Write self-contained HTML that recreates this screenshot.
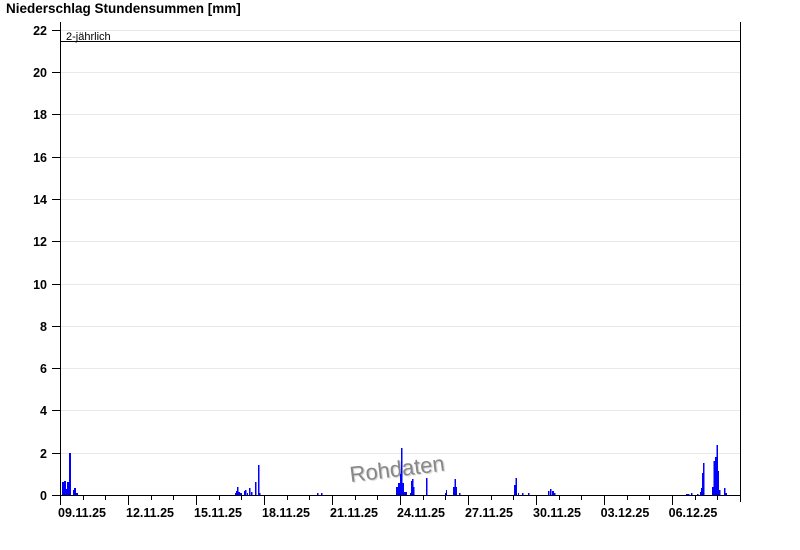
<!DOCTYPE html>
<html><head><meta charset="utf-8"><style>
html,body{margin:0;padding:0;background:#fff;width:800px;height:550px;overflow:hidden}
svg{display:block}
text{font-family:"Liberation Sans",Arial,sans-serif}
</style></head><body>
<svg width="800" height="550" xmlns="http://www.w3.org/2000/svg">
<text x="6" y="13" font-size="13.5" font-weight="bold">Niederschlag Stundensummen [mm]</text>
<g stroke="#e8e8e8" stroke-width="1">
<line x1="61" x2="740" y1="30.5" y2="30.5"/>
<line x1="61" x2="740" y1="72.5" y2="72.5"/>
<line x1="61" x2="740" y1="114.5" y2="114.5"/>
<line x1="61" x2="740" y1="157.5" y2="157.5"/>
<line x1="61" x2="740" y1="199.5" y2="199.5"/>
<line x1="61" x2="740" y1="241.5" y2="241.5"/>
<line x1="61" x2="740" y1="284.5" y2="284.5"/>
<line x1="61" x2="740" y1="326.5" y2="326.5"/>
<line x1="61" x2="740" y1="368.5" y2="368.5"/>
<line x1="61" x2="740" y1="410.5" y2="410.5"/>
<line x1="61" x2="740" y1="453.5" y2="453.5"/>
</g>
<g font-size="12.5" font-weight="bold" text-anchor="end">
<text x="47" y="35">22</text><text x="47" y="77">20</text><text x="47" y="119">18</text>
<text x="47" y="162">16</text><text x="47" y="204">14</text><text x="47" y="246">12</text>
<text x="47" y="289">10</text><text x="47" y="331">8</text><text x="47" y="373">6</text>
<text x="47" y="415">4</text><text x="47" y="458">2</text><text x="47" y="500">0</text>
</g>
<g stroke="#000" stroke-width="1">
<line x1="52" x2="61" y1="30.5" y2="30.5"/><line x1="52" x2="61" y1="72.5" y2="72.5"/>
<line x1="52" x2="61" y1="114.5" y2="114.5"/><line x1="52" x2="61" y1="157.5" y2="157.5"/>
<line x1="52" x2="61" y1="199.5" y2="199.5"/><line x1="52" x2="61" y1="241.5" y2="241.5"/>
<line x1="52" x2="61" y1="284.5" y2="284.5"/><line x1="52" x2="61" y1="326.5" y2="326.5"/>
<line x1="52" x2="61" y1="368.5" y2="368.5"/><line x1="52" x2="61" y1="410.5" y2="410.5"/>
<line x1="52" x2="61" y1="453.5" y2="453.5"/><line x1="52" x2="61" y1="495.5" y2="495.5"/>
</g>
<text x="349" y="476" font-size="22" fill="#888" transform="rotate(-7 400 466)" style="text-shadow:1px 1px 1px #ccc">Rohdaten</text>
<g fill="#0000ff">
<rect x="62" y="482" width="2" height="13"/><rect x="64" y="481" width="2" height="14"/><rect x="66" y="489" width="1" height="6"/>
<rect x="67" y="482" width="2" height="13"/><rect x="69" y="453" width="2" height="42"/><rect x="73" y="490" width="1" height="5"/>
<rect x="74" y="488" width="2" height="7"/><rect x="76" y="493" width="2" height="2"/>
<rect x="235" y="493" width="1" height="2"/><rect x="236" y="491" width="1" height="4"/><rect x="237" y="487" width="1.5" height="8"/>
<rect x="238.5" y="492" width="1.5" height="3"/><rect x="240" y="493" width="2" height="2"/><rect x="244" y="491" width="1" height="4"/>
<rect x="245" y="490" width="1.5" height="5"/><rect x="247" y="493" width="1" height="2"/><rect x="249" y="488" width="1.5" height="7"/>
<rect x="251" y="492" width="1.5" height="3"/><rect x="255" y="482" width="1.5" height="13"/><rect x="258" y="465" width="1.5" height="30"/>
<rect x="259.5" y="493" width="1" height="2"/>
<rect x="317" y="493" width="1.5" height="2"/><rect x="321" y="493" width="1.5" height="2"/>
<rect x="396" y="487" width="2" height="8"/><rect x="398" y="483" width="2" height="12"/><rect x="400" y="474" width="1" height="21"/>
<rect x="401" y="448" width="1.5" height="47"/><rect x="402.5" y="483" width="1.5" height="12"/><rect x="404" y="492" width="3" height="3"/>
<rect x="410" y="493" width="1" height="2"/><rect x="411" y="481" width="1" height="14"/><rect x="412" y="479" width="1.5" height="16"/>
<rect x="413.5" y="487" width="1" height="8"/><rect x="426" y="478" width="1.5" height="17"/>
<rect x="445" y="493" width="1" height="2"/><rect x="446" y="490" width="1" height="5"/><rect x="453" y="487" width="1.5" height="8"/>
<rect x="454.5" y="479" width="1.5" height="16"/><rect x="456" y="487" width="1" height="8"/><rect x="459" y="493" width="1.5" height="2"/>
<rect x="514" y="485" width="1.5" height="10"/><rect x="515.5" y="478" width="1.5" height="17"/><rect x="518" y="493" width="1" height="2"/>
<rect x="522" y="493" width="1.5" height="2"/><rect x="528" y="493" width="1.5" height="2"/>
<rect x="548" y="491" width="1.5" height="4"/><rect x="550" y="489" width="1.5" height="6"/><rect x="552" y="491" width="2" height="4"/>
<rect x="554" y="493" width="1.5" height="2"/>
<rect x="686" y="494" width="3.5" height="1"/><rect x="691" y="493" width="1.5" height="2"/><rect x="697" y="494" width="1.5" height="1"/>
<rect x="700" y="492" width="1" height="3"/><rect x="701" y="488" width="1" height="7"/><rect x="702" y="473" width="1" height="22"/>
<rect x="703" y="463" width="1.5" height="32"/>
<rect x="712" y="487" width="1.5" height="8"/><rect x="713.5" y="461" width="1.5" height="34"/><rect x="715" y="457" width="1.5" height="38"/>
<rect x="716.5" y="445" width="1.5" height="50"/><rect x="718" y="471" width="1" height="24"/><rect x="719" y="490" width="1.5" height="5"/>
<rect x="724" y="488" width="1.5" height="7"/><rect x="725.5" y="493" width="1.5" height="2"/>
</g>
<g stroke="#000" stroke-width="1">
<line x1="60.5" x2="60.5" y1="22" y2="496"/>
<line x1="740.5" x2="740.5" y1="22" y2="502"/>
<line x1="60" x2="741" y1="495.5" y2="495.5"/>
<line x1="61" x2="740" y1="41.5" y2="41.5"/>
</g>
<g stroke="#000" stroke-width="1">
<line x1="60.5" x2="60.5" y1="495" y2="505"/><line x1="128.5" x2="128.5" y1="495" y2="505"/>
<line x1="196.5" x2="196.5" y1="495" y2="505"/><line x1="264.5" x2="264.5" y1="495" y2="505"/>
<line x1="332.5" x2="332.5" y1="495" y2="505"/><line x1="400.5" x2="400.5" y1="495" y2="505"/>
<line x1="468.5" x2="468.5" y1="495" y2="505"/><line x1="536.5" x2="536.5" y1="495" y2="505"/>
<line x1="604.5" x2="604.5" y1="495" y2="505"/><line x1="672.5" x2="672.5" y1="495" y2="505"/>
<line x1="83.5" x2="83.5" y1="495" y2="500"/><line x1="105.5" x2="105.5" y1="495" y2="500"/>
<line x1="151.5" x2="151.5" y1="495" y2="500"/><line x1="173.5" x2="173.5" y1="495" y2="500"/>
<line x1="219.5" x2="219.5" y1="495" y2="500"/><line x1="241.5" x2="241.5" y1="495" y2="500"/>
<line x1="287.5" x2="287.5" y1="495" y2="500"/><line x1="309.5" x2="309.5" y1="495" y2="500"/>
<line x1="355.5" x2="355.5" y1="495" y2="500"/><line x1="377.5" x2="377.5" y1="495" y2="500"/>
<line x1="423.5" x2="423.5" y1="495" y2="500"/><line x1="445.5" x2="445.5" y1="495" y2="500"/>
<line x1="491.5" x2="491.5" y1="495" y2="500"/><line x1="513.5" x2="513.5" y1="495" y2="500"/>
<line x1="559.5" x2="559.5" y1="495" y2="500"/><line x1="581.5" x2="581.5" y1="495" y2="500"/>
<line x1="627.5" x2="627.5" y1="495" y2="500"/><line x1="649.5" x2="649.5" y1="495" y2="500"/>
<line x1="695.5" x2="695.5" y1="495" y2="500"/><line x1="717.5" x2="717.5" y1="495" y2="500"/>
</g>
<g font-size="12.5" font-weight="bold" text-anchor="middle">
<text x="82" y="517">09.11.25</text><text x="150" y="517">12.11.25</text><text x="218" y="517">15.11.25</text>
<text x="286" y="517">18.11.25</text><text x="354" y="517">21.11.25</text><text x="421" y="517">24.11.25</text>
<text x="489" y="517">27.11.25</text><text x="557" y="517">30.11.25</text><text x="625" y="517">03.12.25</text>
<text x="693" y="517">06.12.25</text>
</g>
<text x="66" y="40" font-size="11">2-jährlich</text>
</svg>
</body></html>
